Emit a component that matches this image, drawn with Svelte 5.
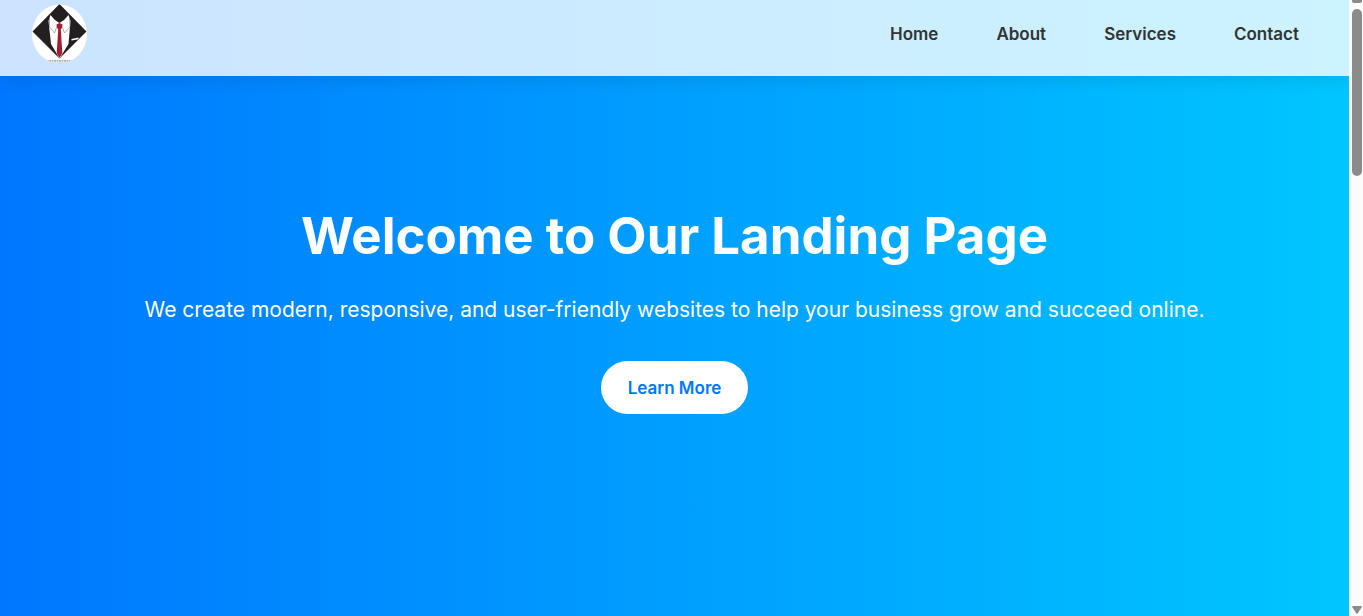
<script>
  const links = ['Home', 'About', 'Services', 'Contact'];
</script>

<div class="window">
  <div class="page">
    <header>
      <a class="brand" href="#home" aria-label="Home page">
        <svg viewBox="0 0 56 60" width="56" height="60" aria-hidden="true">
          <defs>
            <clipPath id="badge"><ellipse cx="27.500" cy="30" rx="27.500" ry="29.500" /></clipPath>
          </defs>
          <g clip-path="url(#badge)">
            <rect width="56" height="58" fill="#fff" />
            <path d="M27.500 0 54.500 27.500 27.500 54.500 0.500 27.500Z" fill="#231f20" />
            <path d="M18.500 11Q22 16 27.500 19Q33 16 36.500 11L38.500 17 36.500 40 27.500 54.500 19 40 16.500 17Z" fill="#fff" />
            <path d="M17.500 14 17.500 23 22.500 29 25.500 21M37.500 14 38 23 32.500 29 29.500 21" fill="none" stroke="#8a8a8a" stroke-width="0.700" />
            <path d="M24.500 20.500 27.500 19 30.500 20.500 30 23.500 28.800 25.500 30.300 49 27.500 54 24.700 49 26.200 25.500 25 23.500Z" fill="#a51c2b" />
            <path d="M39.500 35 46.500 33.500 46.500 35.200 39.500 36.500Z" fill="#fff" />
            <rect x="15" y="56" width="25" height="1.500" fill="#d8d4d0" />
            <path d="M17 57H38" stroke="#99938e" stroke-width="1" stroke-dasharray="2 1 1 1" />
          </g>
        </svg>
      </a>
      <nav aria-label="Main">
        {#each links as link}
          <a href={'#' + link.toLowerCase()}>{link}</a>
        {/each}
      </nav>
    </header>
    <main>
      <h1>Welcome to Our Landing Page</h1>
      <p>We create modern, responsive, and user-friendly websites to help your business grow and succeed online.</p>
      <a class="cta" href="#about">Learn More</a>
    </main>
  </div>
  <div class="scrollbar" aria-hidden="true">
    <span class="up"></span>
    <span class="thumb"></span>
    <svg viewBox="0 0 10 8" width="10" height="8"><path d="M1 0H9Q10.500 0 9.500 1.500L6 7Q5 8.500 4 7L0.500 1.500Q-0.500 0 1 0Z" fill="#8b8b8b" /></svg>
  </div>
</div>

<style>
  .window {
    display: flex;
    min-height: 100vh;
    font-family: Inter, sans-serif;
  }

  .page {
    flex: 1;
    min-width: 0;
    background: linear-gradient(to right, #0077ff, #00c6ff);
  }

  header {
    display: flex;
    align-items: center;
    justify-content: space-between;
    padding: 4px 50px 12px 32px;
    background: rgba(255, 255, 255, 0.8);
    box-shadow: 0 4px 16px rgba(0, 0, 0, 0.1);
  }

  .brand svg {
    display: block;
  }

  nav {
    display: flex;
    gap: 58px;
  }

  nav a {
    color: #333;
    font-size: 17px;
    font-weight: 600;
    line-height: 20px;
    text-decoration: none;
  }

  main {
    display: flex;
    flex-direction: column;
    align-items: center;
    padding: 128px 20px 40px;
    color: #fff;
    text-align: center;
  }

  h1 {
    margin: 0 0 28px;
    font-size: 51px;
    font-weight: 700;
    line-height: 64px;
  }

  p {
    margin: 0 0 37px;
    font-size: 21px;
    line-height: 28px;
  }

  .cta {
    padding: 17px 27px 16px;
    border-radius: 30px;
    background: #fff;
    color: #0077ff;
    font-size: 17px;
    font-weight: 600;
    line-height: 20px;
    text-decoration: none;
  }

  .scrollbar {
    display: flex;
    flex-direction: column;
    align-items: center;
    width: 14px;
    padding: 0 0 2px 2px;
    box-sizing: border-box;
    background: #fcfcfc;
  }

  .up {
    width: 10px;
    height: 3px;
    border-radius: 0 0 2px 2px;
    background: #8b8b8b;
  }

  .thumb {
    width: 10px;
    height: 167px;
    margin: 6px 0 auto;
    border-radius: 5px;
    background: #8b8b8b;
  }
</style>
